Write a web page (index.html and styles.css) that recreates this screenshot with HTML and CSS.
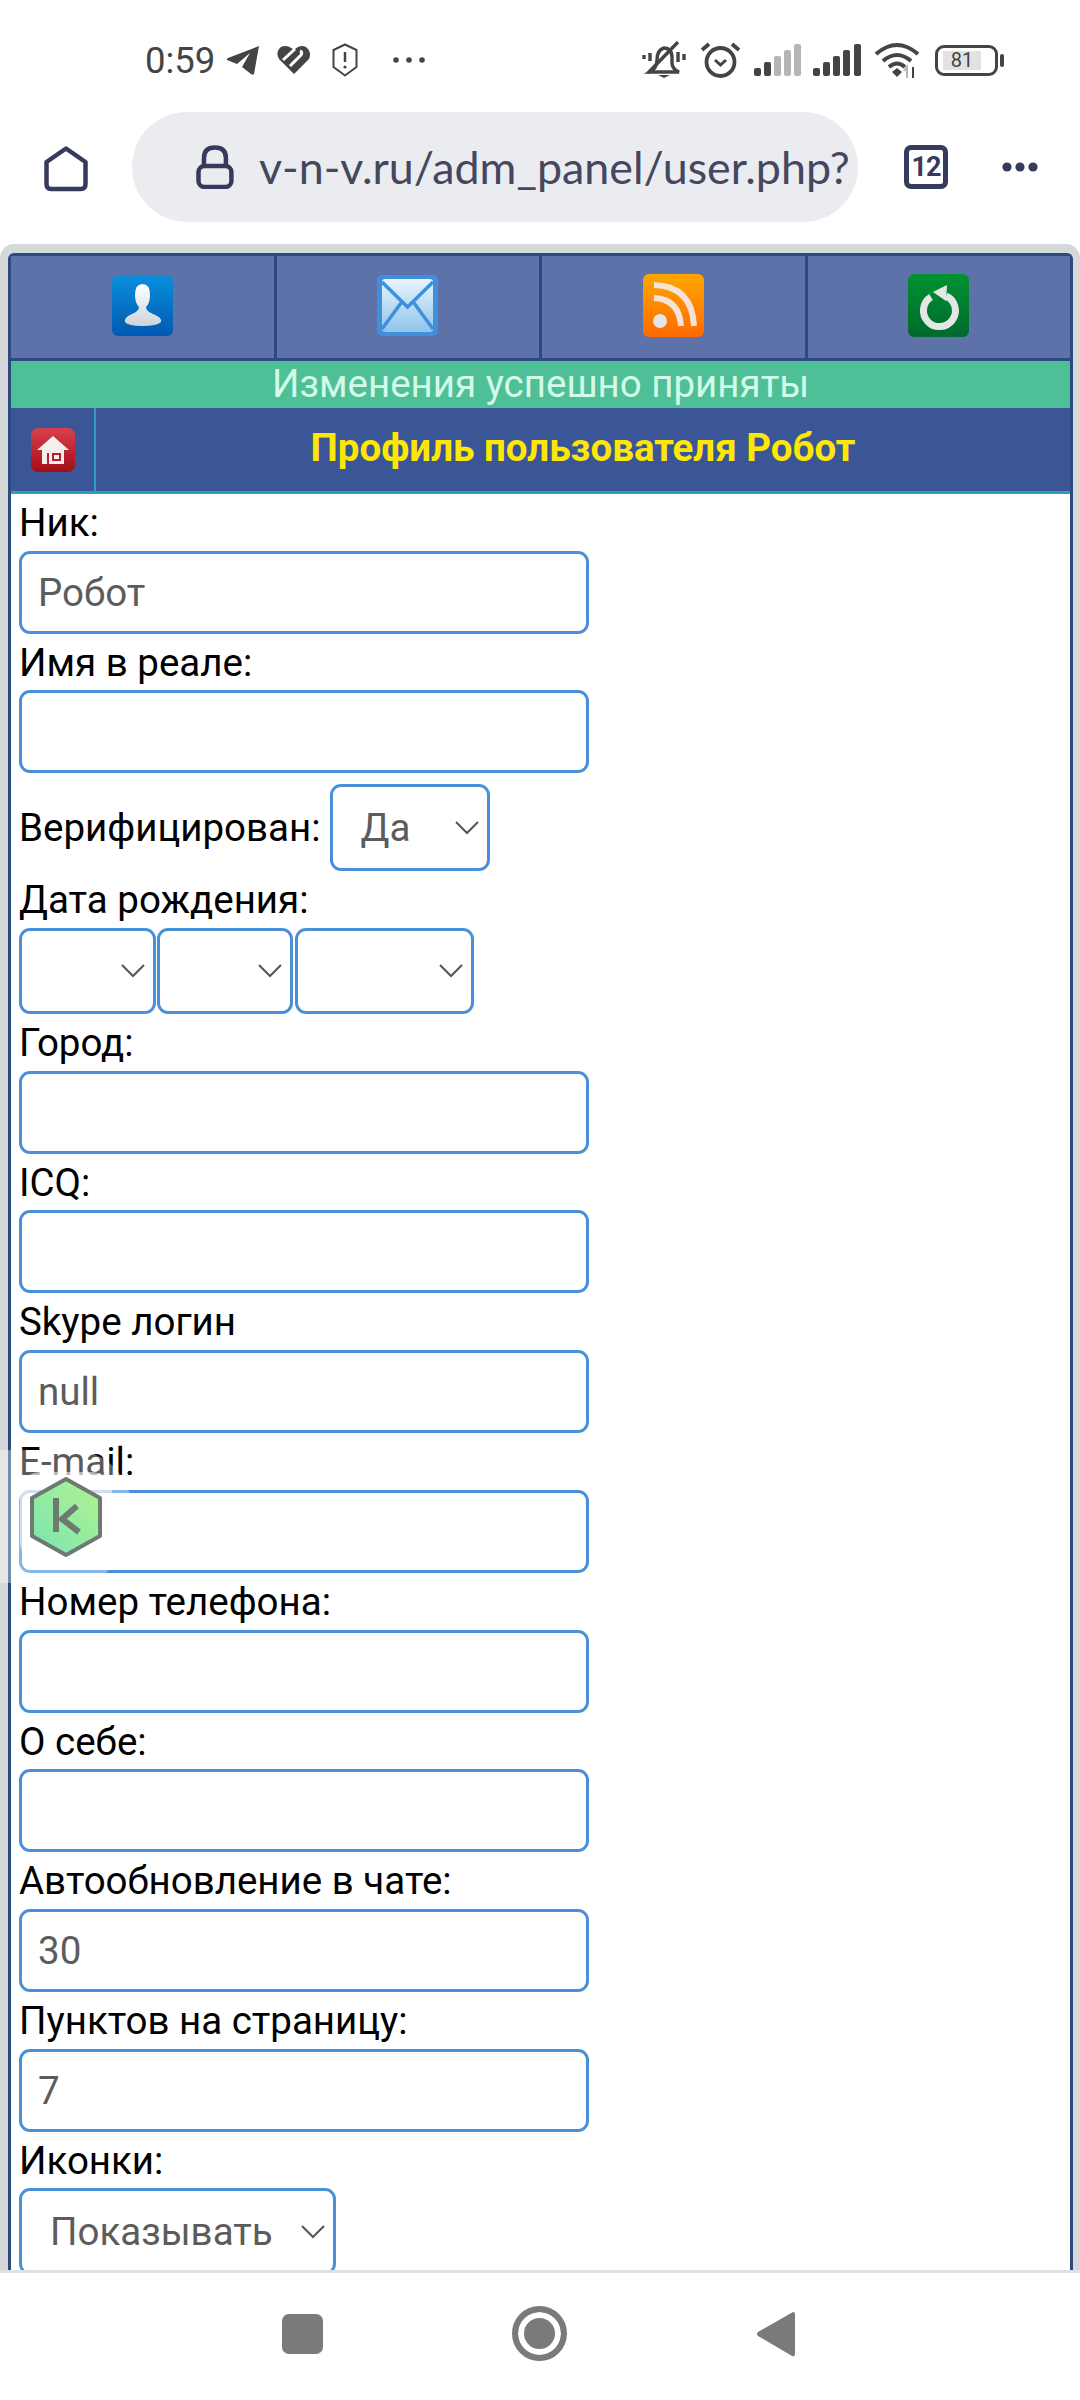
FILE: index.html
```html
<!DOCTYPE html>
<html lang="ru">
<head>
    <meta charset="UTF-8">
    <meta name="viewport" content="width=device-width, initial-scale=1.0">
    <title>Профиль пользователя</title>
    <link rel="stylesheet" href="styles.css">
</head>
<body>
    <div class="phone">
        <div class="status-bar">
            <div class="status-left">
                <span class="time">0:59</span>
                <svg class="st-telegram" width="34" height="30" viewBox="0 0 34 30"><path d="M33 1 L28 29 Q27 30 25 29 L16 22 L24 8 L11 19 L1 15 Q0 14 2 13 Z" fill="#444"/></svg>
                <svg class="st-heart" width="36" height="30" viewBox="0 0 36 30"><path d="M18 29 L3 14 Q-1 7 5 2 Q11 -1 18 5 Q24 -1 30 2 Q36 7 33 14 Z" fill="#444"/><path d="M7 15 L19 4 M14 21 L25 10 Q27 7 24 6" fill="none" stroke="white" stroke-width="3"/></svg>
                <svg class="st-shield" width="26" height="34" viewBox="0 0 26 34"><path d="M13 1.500 L24.500 7 V24 L13 32.500 L1.500 24 V7 Z" fill="none" stroke="#444" stroke-width="2" stroke-linejoin="round"/><path d="M13 9 V19" stroke="#444" stroke-width="2.500"/><circle cx="13" cy="24" r="1.600" fill="#444"/></svg>
                <svg class="st-dots" width="34" height="8" viewBox="0 0 34 8"><circle cx="4" cy="4" r="2.800" fill="#444"/><circle cx="17" cy="4" r="2.800" fill="#444"/><circle cx="30" cy="4" r="2.800" fill="#444"/></svg>
            </div>
            <div class="status-right">
                <svg class="st-mute" width="44" height="38" viewBox="0 0 44 38"><g fill="none" stroke="#444" stroke-width="3.400"><path d="M8 31 Q15 27 15 19 Q15 9 22 7 Q29 7 30 15 V22 Q30 28 37 31 Z"/><path d="M36 1 L6 32"/><path d="M8 12 V20 M2 14 V18 M36 11 V21 M42 13 V19"/></g><path d="M16 34 H28 L22 37 Z" fill="#444"/></svg>
                <svg class="st-alarm" width="41" height="38" viewBox="0 0 41 38"><g fill="none" stroke="#444"><circle cx="20.500" cy="21" r="14" stroke-width="3.800"/><path d="M2 9 L9 3 M39 9 L32 3" stroke-width="3.800"/><path d="M15 19 L20.500 24 L26 19" stroke-width="3"/></g></svg>
                <svg width="47" height="32" viewBox="0 0 47 32"><rect x="0" y="24" width="7" height="8" rx="2" fill="#444"/><rect x="10" y="18" width="7" height="14" rx="2" fill="#444"/><rect x="20" y="12" width="7" height="20" rx="2" fill="#b5b5b5"/><rect x="30" y="6" width="7" height="26" rx="2" fill="#b5b5b5"/><rect x="40" y="0" width="7" height="32" rx="2" fill="#b5b5b5"/></svg>
                <svg class="st-signal" width="48" height="32" viewBox="0 0 48 32"><rect x="0" y="24" width="7" height="8" rx="2" fill="#444"/><rect x="10" y="18" width="7" height="14" rx="2" fill="#444"/><rect x="20" y="12" width="7" height="20" rx="2" fill="#444"/><rect x="30" y="6" width="7" height="26" rx="2" fill="#444"/><rect x="41" y="0" width="7" height="32" rx="2" fill="#444"/></svg>
                <svg width="46" height="36" viewBox="0 0 46 36"><g fill="none" stroke="#444" stroke-width="4"><path d="M2 12 Q23 -6 44 12"/><path d="M9 19 Q23 7 37 19"/><path d="M15 25 Q23 18 31 25"/></g><path d="M18 30 L23 26 L28 30 L23 35 Z" fill="#444"/><path d="M33 36 V25 L30 29" fill="none" stroke="#b5b5b5" stroke-width="2"/><path d="M39 25 V36" stroke="#444" stroke-width="2"/></svg>
                <div class="battery"><span class="battery-level">81</span></div>
                <span class="battery-nub"></span>
            </div>
        </div>

        <div class="toolbar">
            <svg class="tb-home" width="44" height="46" viewBox="0 0 44 46"><path d="M22 2.500 L41.500 16 V38 Q41.500 43 37 43 H7 Q2.500 43 2.500 38 V16 Z" fill="none" stroke="#363a5c" stroke-width="4.500" stroke-linejoin="round"/></svg>
            <div class="url-pill">
                <svg class="tb-lock" width="38" height="44" viewBox="0 0 38 44"><rect x="2.500" y="21" width="33" height="21" rx="6" fill="none" stroke="#363a5c" stroke-width="4.500"/><path d="M8 21 V13 Q8 2.500 19 2.500 Q30 2.500 30 13 V21" fill="none" stroke="#363a5c" stroke-width="4.500"/></svg>
                <div class="url-text">v-n-v.ru/adm_panel/user.php?</div>
            </div>
            <div class="tab-count">12</div>
            <svg class="tb-menu" width="36" height="10" viewBox="0 0 36 10"><circle cx="5" cy="5" r="4.600" fill="#363a5c"/><circle cx="18" cy="5" r="4.600" fill="#363a5c"/><circle cx="31" cy="5" r="4.600" fill="#363a5c"/></svg>
        </div>

        <div class="viewport">
            <div class="page">
                <div class="top-nav">
                    <div class="top-nav-item">
                        <svg width="61" height="61" viewBox="0 0 61 61"><defs><linearGradient id="gUser" x1="0" y1="0" x2="0" y2="1"><stop offset="0" stop-color="#0a8fdc"/><stop offset="1" stop-color="#0059b2"/></linearGradient><linearGradient id="gFig" x1="0" y1="0" x2="0" y2="1"><stop offset="0" stop-color="#ffffff"/><stop offset="1" stop-color="#cfd3d8"/></linearGradient></defs><rect width="61" height="61" rx="6" fill="url(#gUser)"/><path d="M30.500 9 Q38 9 38 20 Q38 28 34 32 Q34 36 41 39 Q50 42 49 47 Q45 51 30.500 51 Q16 51 13 47 Q12 42 20 39 Q27 36 27 32 Q23 28 23 20 Q23 9 30.500 9 Z" fill="url(#gFig)"/></svg>
                    </div>
                    <div class="top-nav-item">
                        <svg width="61" height="61" viewBox="0 0 61 61"><defs><linearGradient id="gMail" x1="0" y1="0" x2="0" y2="1"><stop offset="0" stop-color="#e8f4fc"/><stop offset="1" stop-color="#8fc4ec"/></linearGradient></defs><rect width="61" height="61" rx="5" fill="#3f8fdb"/><rect x="5" y="4" width="51" height="53" rx="3" fill="url(#gMail)"/><path d="M5 7 L30.500 32 L56 7 M5 54 L24 28 M56 54 L37 28" fill="none" stroke="#3f8fdb" stroke-width="3.500"/></svg>
                    </div>
                    <div class="top-nav-item">
                        <svg width="61" height="63" viewBox="0 0 61 63"><defs><linearGradient id="gRss" x1="0" y1="0" x2="0" y2="1"><stop offset="0" stop-color="#ffa600"/><stop offset="1" stop-color="#ff6a00"/></linearGradient></defs><rect width="61" height="63" rx="6" fill="url(#gRss)"/><circle cx="17" cy="47" r="7" fill="#e4e4ea"/><g fill="none" stroke="#f2e4d8" stroke-width="6"><path d="M11 24 Q36 25 38 52"/><path d="M11 11 Q49 12 51 52"/></g></svg>
                    </div>
                    <div class="top-nav-item">
                        <svg width="61" height="63" viewBox="0 0 61 63"><defs><linearGradient id="gReload" x1="0" y1="0" x2="0" y2="1"><stop offset="0" stop-color="#009233"/><stop offset="1" stop-color="#006a2c"/></linearGradient></defs><rect width="61" height="63" rx="6" fill="url(#gReload)"/><path d="M23 23 A16 16 0 1 0 38 22" fill="none" stroke="#e4e8e4" stroke-width="7"/><path d="M25 18 L39 11 L38 27 Z" fill="#e4e8e4"/></svg>
                    </div>
                </div>
                <div class="notice">Изменения успешно приняты</div>
                <div class="title-row">
                    <div class="title-icon">
                        <svg width="44" height="44" viewBox="0 0 44 44"><defs><linearGradient id="gHome" x1="0" y1="0" x2="0" y2="1"><stop offset="0" stop-color="#d9404f"/><stop offset="1" stop-color="#a30d16"/></linearGradient></defs><rect width="44" height="44" rx="7" fill="url(#gHome)"/><path d="M22 8 L38 22 H33 V36 H11 V22 H6 Z" fill="#f6eeee"/><path d="M17 25 V36 M22 26 H29 V32 H22 Z" fill="none" stroke="#b5202c" stroke-width="2"/></svg>
                    </div>
                    <h1 class="title">Профиль пользователя Робот</h1>
                </div>

                <form class="profile-form">
                    <label>Ник:</label>
                    <input type="text" value="Робот">
                    <label>Имя в реале:</label>
                    <input type="text">
                    <div class="verified-row">
                        <label>Верифицирован:</label>
                        <select class="sel-verified"><option>Да</option></select>
                    </div>
                    <label>Дата рождения:</label>
                    <div class="date-row">
                        <select class="sel-day"><option></option></select>
                        <select class="sel-month"><option></option></select>
                        <select class="sel-year"><option></option></select>
                    </div>
                    <label>Город:</label>
                    <input type="text">
                    <label>ICQ:</label>
                    <input type="text">
                    <label>Skype логин</label>
                    <input type="text" value="null">
                    <label>E-mail:</label>
                    <input type="text">
                    <label>Номер телефона:</label>
                    <input type="text">
                    <label>О себе:</label>
                    <input type="text">
                    <label>Автообновление в чате:</label>
                    <input type="text" value="30">
                    <label>Пунктов на страницу:</label>
                    <input type="text" value="7">
                    <label>Иконки:</label>
                    <select class="sel-icons"><option>Показывать</option></select>
                </form>
            </div>
        </div>

        <div class="nav-bar">
            <span class="nav-square"></span>
            <span class="nav-circle"></span>
            <svg width="38" height="46" viewBox="0 0 38 46"><path d="M36 1 Q38 1 38 3 V43 Q38 46 35 45 L1 25 Q-1 23 1 21 Z" fill="#7a7a7a"/></svg>
        </div>

        <!-- floating antivirus bubble -->
        <div class="float-bubble">
            <div class="float-inner">
                <svg width="74" height="82" viewBox="0 0 74 82"><defs><linearGradient id="gKas" x1="0" y1="1" x2="1" y2="0"><stop offset="0" stop-color="#78e4b4"/><stop offset="1" stop-color="#b2f48c"/></linearGradient></defs><path d="M37 3 L71 22 V60 L37 79 L3 60 V22 Z" fill="url(#gKas)" stroke="#6d7a70" stroke-width="4" stroke-linejoin="round"/><path d="M27 22 V56 M48 30 L33 43 L50 56" fill="none" stroke="#6d7a70" stroke-width="6"/></svg>
            </div>
        </div>
    </div>
</body>
</html>
```

FILE: styles.css
```css
:root {
    --toolbar-ink: #363a5c;
    --field-border: #4a90d9;
    --navy: #2c4a80;
}
* {
    box-sizing: border-box;
}
body {
    margin: 0;
    background-color: white;
    font-family: 'Roboto', sans-serif;
}
.phone {
    position: relative;
    width: 1080px;
    height: 2400px;
    display: flex;
    flex-direction: column;
    overflow: hidden;
}

/* status bar */
.status-bar {
    height: 112px;
    padding: 41px 76px 0 145px;
    display: flex;
    justify-content: space-between;
    align-items: flex-start;
    color: #444;
}
.status-left {
    display: flex;
    align-items: center;
    height: 38px;
}
.time {
    font-size: 36.5px;
    width: 81px;
}
.st-heart {
    margin-left: 16px;
}
.st-shield {
    margin-left: 20px;
}
.st-dots {
    margin-left: 34px;
}
.status-right {
    display: flex;
    align-items: center;
    gap: 12px;
    height: 38px;
}
.st-mute {
    margin-right: 2px;
}
.st-alarm,
.st-signal {
    margin-right: 1px;
}
.battery {
    width: 63px;
    height: 31px;
    margin-left: 3px;
    border: 3px solid #444;
    border-radius: 9px;
    padding: 3px 14px 3px 5px;
    display: flex;
}
.battery-level {
    flex-grow: 1;
    background-color: #e2e2e2;
    font-size: 20px;
    line-height: 19px;
    text-align: center;
}
.battery-nub {
    width: 4px;
    height: 13px;
    margin-left: -10px;
    background-color: #444;
    border-radius: 2px;
}

/* browser toolbar */
.toolbar {
    height: 132px;
    padding-bottom: 22px;
    display: flex;
    align-items: center;
}
.tb-home {
    margin: 4px 0 0 44px;
}
.url-pill {
    width: 726px;
    height: 110px;
    margin-left: 44px;
    padding: 0 10px 0 64px;
    background-color: #eaecf0;
    border-radius: 55px;
    display: flex;
    align-items: center;
}
.url-text {
    margin-left: 25px;
    overflow: hidden;
    white-space: nowrap;
    font-family: 'Lato', sans-serif;
    font-size: 44.8px;
    color: #44475f;
}
.tab-count {
    width: 44px;
    height: 44px;
    margin-left: 46px;
    border: 5px solid var(--toolbar-ink);
    border-radius: 7px;
    color: var(--toolbar-ink);
    font-size: 27px;
    font-weight: 700;
    line-height: 34px;
    text-align: center;
    letter-spacing: -1px;
}
.tb-menu {
    margin-left: 54px;
}

/* web page */
.viewport {
    height: 2026px;
    padding: 9px 7px 0 8px;
    background-color: #d6d9d9;
    border-radius: 14px 14px 0 0;
    overflow: hidden;
}
.page {
    height: 100%;
    background-color: white;
    border: 3px solid var(--navy);
    border-bottom: none;
    border-radius: 6px 6px 0 0;
}
.top-nav {
    display: flex;
    height: 105px;
    background-color: #5e72aa;
    border-bottom: 3px solid var(--navy);
}
.top-nav-item {
    flex: 1;
    display: flex;
    justify-content: center;
    align-items: center;
    border-left: 3px solid var(--navy);
    padding-bottom: 3px;
}
.top-nav-item:first-child {
    border-left: none;
}
.notice {
    height: 47px;
    background-color: #4fbf97;
    color: #d2fbe8;
    font-size: 38.5px;
    line-height: 45px;
    text-align: center;
}
.title-row {
    display: flex;
    height: 86px;
    background-color: #3a5697;
    border-bottom: 3px solid #2f9cc4;
}
.title-icon {
    width: 85px;
    display: flex;
    justify-content: center;
    align-items: center;
    border-right: 2px solid #2f9cc4;
}
.title {
    flex-grow: 1;
    margin: 0;
    color: #ffe800;
    font-size: 38.5px;
    font-weight: 700;
    line-height: 80px;
    text-align: center;
}

/* form */
.profile-form {
    padding: 0 8px;
}
label {
    display: block;
    height: 56.7px;
    font-size: 38.5px;
    line-height: 57px;
    color: #000;
}
input,
select {
    display: block;
    border: 3px solid var(--field-border);
    border-radius: 11px;
    background-color: white;
    color: #5c5c5c;
    font-family: 'Roboto', sans-serif;
    font-size: 38.5px;
    outline: none;
}
input {
    width: 570px;
    height: 83px;
    padding: 0 16px;
}
select {
    appearance: none;
    height: 87px;
    padding: 0 28px;
    background-image: url("data:image/svg+xml,%3Csvg xmlns='http://www.w3.org/2000/svg' width='24' height='14'%3E%3Cpath d='M1 1 L12 12 L23 1' fill='none' stroke='%23555' stroke-width='2'/%3E%3C/svg%3E");
    background-repeat: no-repeat;
    background-position: right 8px center;
}
.verified-row {
    display: flex;
    align-items: center;
    gap: 9px;
    margin-top: 11px;
}
.verified-row label {
    height: auto;
}
.sel-verified {
    width: 160px;
}
.date-row {
    display: flex;
    gap: 1px;
}
.date-row select {
    height: 86px;
}
.sel-day {
    width: 137px;
}
.sel-month {
    width: 136px;
}
.sel-year {
    width: 179px;
    margin-left: 1px;
}
.sel-icons {
    width: 317px;
}

/* android buttons */
.nav-bar {
    flex-grow: 1;
    border-top: 3px solid #dfe2e2;
    background-color: white;
    padding-bottom: 6px;
    padding-left: 282px;
    display: flex;
    align-items: center;
}
.nav-square {
    width: 41px;
    height: 40px;
    background-color: #7a7a7a;
    border-radius: 7px;
}
.nav-circle {
    width: 55px;
    height: 55px;
    margin: 0 190px 0 189px;
    border: 6px solid #7a7a7a;
    border-radius: 50%;
    background-color: #7a7a7a;
    box-shadow: inset 0 0 0 6px white;
}

/* floats over the form */
.float-bubble {
    position: absolute;
    left: 0;
    top: 1450px;
    width: 132px;
    height: 133px;
    padding: 22px 0 0 20px;
    background-color: rgba(255, 255, 255, 0.35);
    border-radius: 0 60px 60px 0;
}
.float-inner {
    width: 92px;
    height: 90px;
    background-color: rgba(255, 255, 255, 0.55);
    border-radius: 20px;
    padding: 4px 0 0 9px;
}
```
